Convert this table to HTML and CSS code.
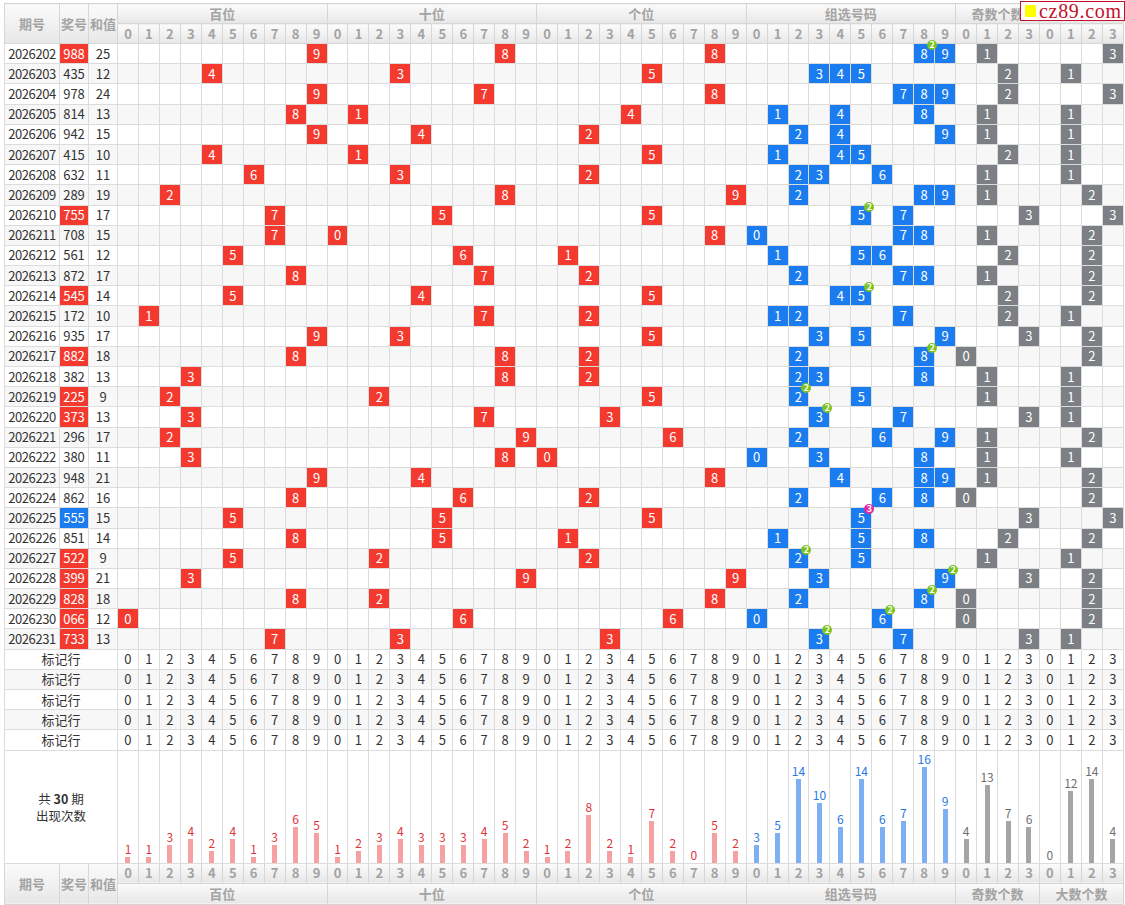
FILE: index.html
```html
<!DOCTYPE html>
<html lang="zh-CN">
<head>
<meta charset="utf-8">
<title>3D 走势图</title>
<link rel="stylesheet" href="styles.css">
</head>
<body>
<div class="chart">
  <table class="trend" id="trend"></table>
  <div class="logo"><span class="logo-mark"></span><span class="logo-text">cz89.com</span></div>
</div>
<script src="script.js"></script>
</body>
</html>
```

FILE: styles.css
```css
body {
  margin: 0;
  background: #fff;
  font-family: "Noto Sans CJK SC", "Noto Sans", sans-serif;
}
.chart {
  position: relative;
  padding: 3px 0 0 4px;
}
.trend {
  border-collapse: collapse;
  table-layout: fixed;
  width: 1120px;
  font-size: 13px;
  color: #333;
}
.trend td,
.trend th {
  border: 1px solid #dcdcdc;
  padding: 0;
  text-align: center;
  white-space: nowrap;
  line-height: 16px;
}
.trend td.issue {
  letter-spacing: -0.4px;
}
.trend thead th,
.trend tfoot th {
  background: linear-gradient(#fbfbfb, #e7e7e7);
  color: #a3a3a3;
  font-weight: bold;
  border-color: #d6d6d6;
}
.trend thead tr,
.trend tfoot tr {
  height: 20px;
}
.trend tfoot tr.labels {
  height: 21px;
}
.trend tbody tr {
  height: 20.2px;
}
.trend tbody tr.alt td {
  background-color: #f7f7f7;
}
.trend .sec {
  border-left: 1px solid #111;
}
.trend tbody tr td.red {
  background-color: #f43a2f;
  color: #fff;
}
.trend tbody tr td.blue {
  background-color: #1b7cf0;
  color: #fff;
}
.trend tbody tr td.gray {
  background-color: #7c7f83;
  color: #fff;
}
.trend td.has-badge {
  position: relative;
}
.badge {
  position: absolute;
  top: -4px;
  right: -3px;
  z-index: 3;
  width: 10px;
  height: 10px;
  border-radius: 50%;
  font-size: 9px;
  line-height: 10px;
  font-weight: bold;
  color: #fff;
  text-align: center;
}
.badge.b2 { background: #7cc322; }
.badge.b3 { background: #e2299b; }

.trend tbody tr.stat-row {
  height: 113px;
}
.trend tbody tr.stat-row td {
  background: #fff;
  vertical-align: bottom;
}
.trend tbody tr.stat-row td.total {
  vertical-align: middle;
  line-height: 17px;
  font-size: 12.5px;
}
.total b {
  font-weight: bold;
}
.bar-wrap {
  display: flex;
  flex-direction: column;
  align-items: center;
}
.bar-num {
  font-size: 12px;
  line-height: 13px;
  margin-bottom: 2px;
}
.bar {
  display: block;
  width: 5px;
}
.c-red .bar-num { color: #e0343c; }
.c-red .bar { background: #f7a0a2; }
.c-blue .bar-num { color: #2a78e4; }
.c-blue .bar { background: #7eaef3; }
.c-gray .bar-num { color: #6f6f6f; }
.c-gray .bar { background: #a5a5a5; }

.logo {
  position: absolute;
  top: 1px;
  left: 1020px;
  width: 105px;
  height: 20px;
  background: #fff;
  border: 1px solid #c4102a;
  display: flex;
  align-items: center;
  gap: 3px;
  padding-left: 4px;
  box-sizing: border-box;
}
.logo-mark {
  width: 11px;
  height: 12px;
  background: #ffff00;
}
.logo-text {
  font-family: "Liberation Serif", serif;
  font-size: 20px;
  line-height: 19px;
  color: #c4102a;
  letter-spacing: 0.7px;
}
```

FILE: script.js
```js
(function () {
  var draws = ["988","435","978","814","942","415","632","289","755","708",
               "561","872","545","172","935","882","382","225","373","296",
               "380","948","862","555","851","522","399","828","066","733"];
  var secs = [
    { name: "百位", n: 10, color: "c-red" },
    { name: "十位", n: 10, color: "c-red" },
    { name: "个位", n: 10, color: "c-red" },
    { name: "组选号码", n: 10, color: "c-blue" },
    { name: "奇数个数", n: 4, color: "c-gray" },
    { name: "大数个数", n: 4, color: "c-gray" }
  ];
  function zeros(n) { var a = []; for (var i = 0; i < n; i++) a.push(0); return a; }
  var stats = secs.map(function (s) { return zeros(s.n); });

  var html = '<colgroup><col style="width:55px"><col style="width:29px"><col style="width:29px">';
  for (var c = 0; c < 48; c++) html += '<col>';
  html += '</colgroup>';

  function digitHeads() {
    var h = '';
    secs.forEach(function (s) {
      for (var k = 0; k < s.n; k++) h += '<th>' + k + '</th>';
    });
    return h;
  }
  function nameHeads() {
    var h = '';
    secs.forEach(function (s) { h += '<th colspan="' + s.n + '">' + s.name + '</th>'; });
    return h;
  }

  html += '<thead><tr><th rowspan="2">期号</th><th rowspan="2">奖号</th><th rowspan="2">和值</th>' +
          nameHeads() + '</tr><tr>' + digitHeads() + '</tr></thead><tbody>';

  draws.forEach(function (s, i) {
    var d = s.split('').map(Number);
    var sum = d[0] + d[1] + d[2];
    var cnt = {};
    d.forEach(function (x) { cnt[x] = (cnt[x] || 0) + 1; });
    var distinct = Object.keys(cnt).length;
    var numCls = distinct === 1 ? 'blue' : (distinct === 2 ? 'red' : '');
    var odd = d.filter(function (x) { return x % 2; }).length;
    var big = d.filter(function (x) { return x >= 5; }).length;
    var r = '<tr' + (i % 2 ? ' class="alt"' : '') + '><td class="issue">' + (2026202 + i) + '</td><td class="' + numCls + '">' + s + '</td><td>' + sum + '</td>';
    for (var p = 0; p < 3; p++) {
      for (var k = 0; k < 10; k++) {
        var cls = k === 0 ? 'sec' : '';
        if (d[p] === k) { r += '<td class="red ' + cls + '">' + k + '</td>'; stats[p][k]++; }
        else r += '<td class="' + cls + '"></td>';
      }
    }
    for (var g = 0; g < 10; g++) {
      var gc = g === 0 ? 'sec' : '';
      if (cnt[g]) {
        stats[3][g] += cnt[g];
        if (cnt[g] > 1) r += '<td class="blue has-badge ' + gc + '">' + g + '<span class="badge b' + cnt[g] + '">' + cnt[g] + '</span></td>';
        else r += '<td class="blue ' + gc + '">' + g + '</td>';
      } else r += '<td class="' + gc + '"></td>';
    }
    [odd, big].forEach(function (v, si) {
      for (var q = 0; q < 4; q++) {
        var qc = q === 0 ? 'sec' : '';
        if (q === v) { r += '<td class="gray ' + qc + '">' + q + '</td>'; stats[4 + si][q]++; }
        else r += '<td class="' + qc + '"></td>';
      }
    });
    html += r + '</tr>';
  });

  for (var m = 0; m < 5; m++) {
    var mr = '<tr' + ((30 + m) % 2 ? ' class="alt"' : '') + '><td colspan="3">标记行</td>';
    secs.forEach(function (s) {
      for (var k = 0; k < s.n; k++) mr += '<td' + (k === 0 ? ' class="sec"' : '') + '>' + k + '</td>';
    });
    html += mr + '</tr>';
  }

  var st = '<tr class="stat-row"><td colspan="3" class="total">共 <b>30</b> 期<br>出现次数</td>';
  secs.forEach(function (s, si) {
    for (var k = 0; k < s.n; k++) {
      var v = stats[si][k];
      st += '<td class="' + s.color + (k === 0 ? ' sec' : '') + '"><div class="bar-wrap"><span class="bar-num">' + v +
            '</span><i class="bar" style="height:' + (v * 6) + 'px"></i></div></td>';
    }
  });
  html += st + '</tr></tbody>';

  html += '<tfoot><tr><th rowspan="2">期号</th><th rowspan="2">奖号</th><th rowspan="2">和值</th>' +
          digitHeads() + '</tr><tr class="labels">' + nameHeads() + '</tr></tfoot>';

  document.getElementById('trend').innerHTML = html;
})();
```
